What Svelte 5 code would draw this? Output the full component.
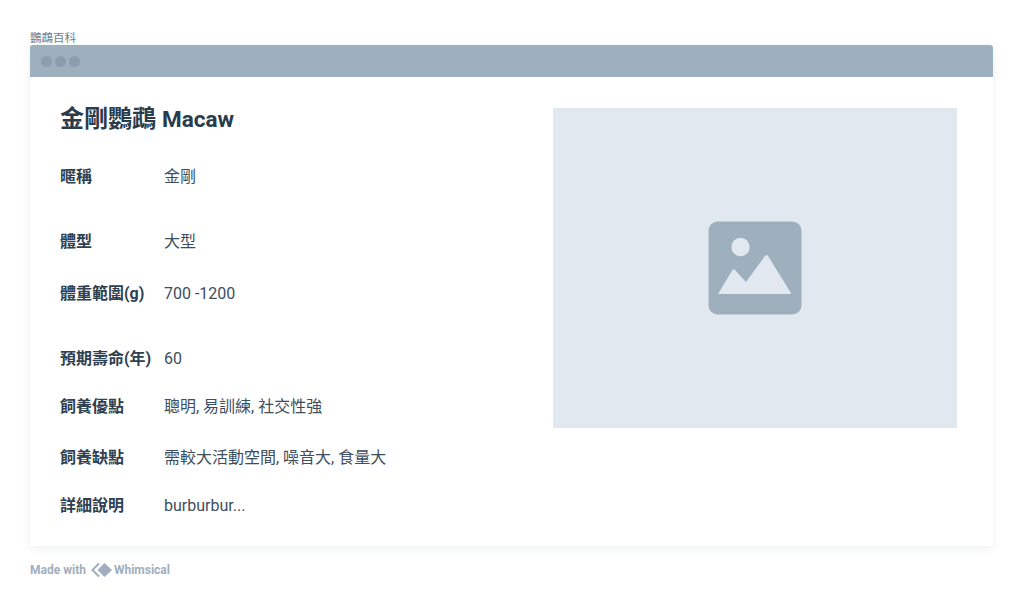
<script>
	const rows = [
		{ label: '暱稱', value: '金剛' },
		{ label: '體型', value: '大型' },
		{ label: '體重範圍(g)', value: '700 -1200' },
		{ label: '預期壽命(年)', value: '60' },
		{ label: '飼養優點', value: '聰明, 易訓練, 社交性強' },
		{ label: '飼養缺點', value: '需較大活動空間, 噪音大, 食量大' },
		{ label: '詳細說明', value: 'burburbur...' }
	];
</script>

<div class="page">
	<div class="caption">鸚鵡百科</div>
	<section class="window">
		<header class="bar">
			<span class="dot"></span>
			<span class="dot"></span>
			<span class="dot"></span>
		</header>
		<div class="content">
			<div class="info">
				<h1>金剛鸚鵡 <span class="latin">Macaw</span></h1>
				<dl>
					{#each rows as row}
						<div class="row">
							<dt>{row.label}</dt>
							<dd>{row.value}</dd>
						</div>
					{/each}
				</dl>
			</div>
			<div class="picture">
				<svg width="94" height="94" viewBox="0 0 94 94" aria-hidden="true">
					<rect x="0.5" y="0.5" width="93" height="93" rx="9" fill="#9eafbd" />
					<circle cx="32.5" cy="26" r="9.2" fill="#e2e8f0" />
					<path
						d="M10 73 L24.500 49 Q25.500 47.500 27 49 L38 61 L57 35 Q58.500 33 60 35 L83 72 Q83.500 73 82 73 Z"
						fill="#e2e8f0"
					/>
				</svg>
			</div>
		</div>
	</section>
	<footer class="made">
		<span>Made with</span>
		<svg width="22" height="16" viewBox="0 0 22 16" aria-hidden="true">
			<path d="M8 1.500 L1.500 8 L8 14.500" fill="none" stroke="#a0aec0" stroke-width="2" />
			<path d="M13.500 1 L21 8 L13.500 15 L6.500 8 Z" fill="#a0aec0" />
		</svg>
		<span>Whimsical</span>
	</footer>
</div>

<style>
	:global(body) {
		margin: 0;
		background: #fff;
	}
	.page {
		width: 1024px;
		height: 593px;
		padding: 31px 31px 0 30px;
		box-sizing: border-box;
		font-family: Roboto, 'Noto Sans CJK TC', sans-serif;
		color: #2d3e50;
		overflow: hidden;
	}
	.caption {
		font-size: 11.5px;
		line-height: 14px;
		color: #6f7c88;
	}
	.window {
		height: 501px;
		border-radius: 3px;
		background: #fff;
		box-shadow: 0 2px 10px rgba(45, 62, 80, 0.09);
	}
	.bar {
		height: 32px;
		display: flex;
		align-items: center;
		gap: 3px;
		padding-left: 11px;
		background: #9eafbd;
		border-radius: 3px 3px 0 0;
	}
	.dot {
		width: 11px;
		height: 11px;
		border-radius: 50%;
		background: #8c9eae;
	}
	.content {
		display: flex;
		justify-content: space-between;
		padding: 31px 36px 0 30px;
	}
	.info {
		width: 460px;
	}
	h1 {
		margin: 0;
		height: 22px;
		font-size: 24px;
		line-height: 22px;
		font-weight: 700;
		color: #2a3b4c;
	}
	.latin {
		font-size: 22.5px;
	}
	dl {
		margin: 37px 0 0;
	}
	.row {
		display: grid;
		grid-template-columns: 104px 1fr;
		height: 20px;
		align-items: center;
		font-size: 16px;
		line-height: 20px;
	}
	.row + .row {
		margin-top: 32px;
	}
	.row:nth-child(2),
	.row:nth-child(4) {
		margin-top: 45px;
	}
	.row:nth-child(6) {
		margin-top: 31px;
	}
	.row:nth-child(5),
	.row:nth-child(7) {
		margin-top: 28px;
	}
	dt {
		font-weight: 700;
		color: #2f4050;
		white-space: nowrap;
	}
	dd {
		margin: 0;
		color: #3d4e5e;
	}
	.picture {
		width: 404px;
		height: 320px;
		display: flex;
		align-items: center;
		justify-content: center;
		background: #e2e8f0;
	}
	.made {
		display: flex;
		align-items: center;
		gap: 3px;
		margin-top: 16px;
		font-size: 12px;
		line-height: 16px;
		font-weight: 700;
		color: #a0aec0;
	}
	.made svg {
		margin: 0 -2px 0 2px;
	}
</style>
